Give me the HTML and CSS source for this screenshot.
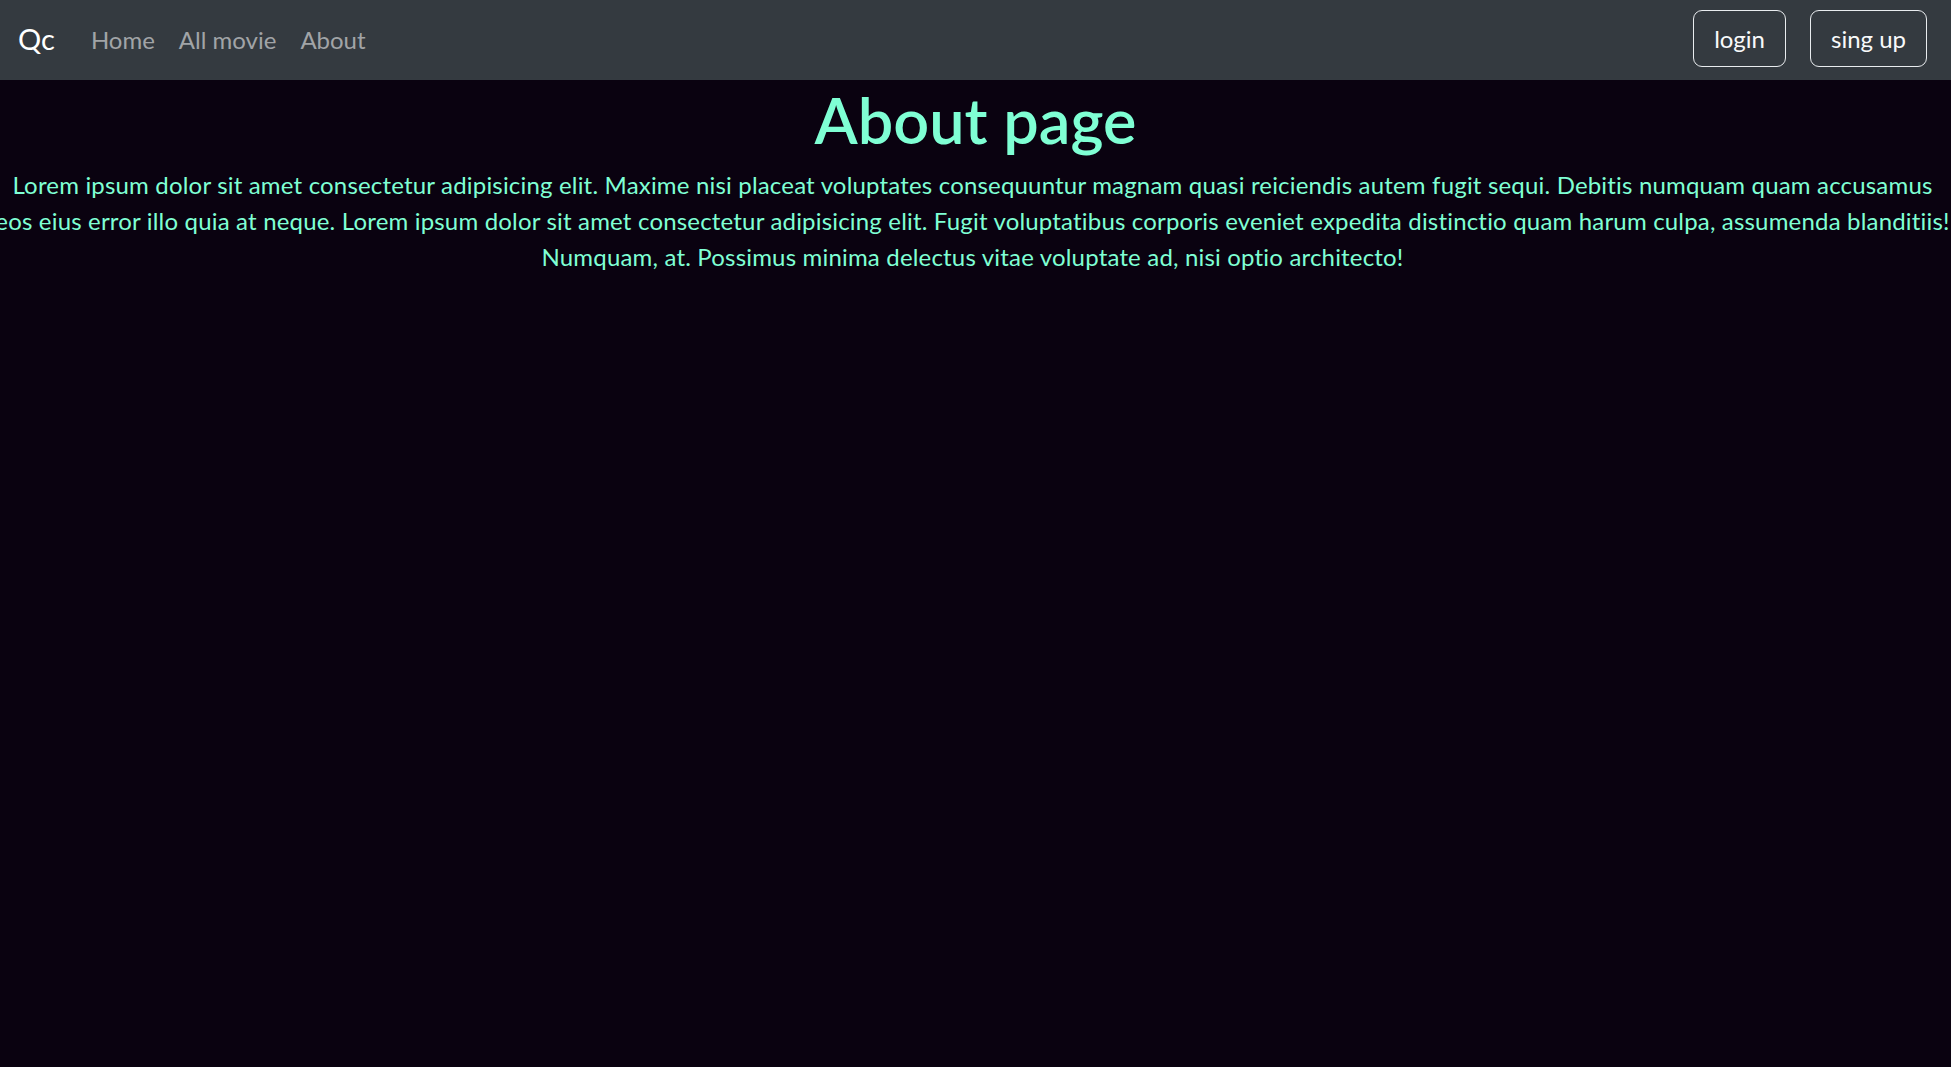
FILE: index.html
```html
<!DOCTYPE html>
<html lang="en">
<head>
<meta charset="utf-8">
<title>About page</title>
<link rel="stylesheet" href="styles.css">
</head>
<body>
<nav class="navbar">
  <a class="brand" href="#">Qc</a>
  <ul class="nav">
    <li><a class="nav-link" href="#">Home</a></li>
    <li><a class="nav-link" href="#">All movie</a></li>
    <li><a class="nav-link" href="#">About</a></li>
  </ul>
  <div class="actions">
    <button class="btn">login</button>
    <button class="btn">sing up</button>
  </div>
</nav>
<main class="about">
  <h1 class="title">About page</h1>
  <p class="text">Lorem ipsum dolor sit amet consectetur adipisicing elit. Maxime nisi placeat voluptates consequuntur magnam quasi reiciendis autem fugit sequi. Debitis numquam quam accusamus<br>eos eius error illo quia at neque. Lorem ipsum dolor sit amet consectetur adipisicing elit. Fugit voluptatibus corporis eveniet expedita distinctio quam harum culpa, assumenda blanditiis!<br>Numquam, at. Possimus minima delectus vitae voluptate ad, nisi optio architecto!</p>
</main>
</body>
</html>
```
FILE: styles.css
```css
* {
  box-sizing: border-box;
}

html, body {
  margin: 0;
  height: 100%;
}

body {
  background: #0a0210;
  font-family: Lato, "Open Sans", "Liberation Sans", sans-serif;
  font-size: 24px;
  line-height: 1.5;
  color: #7fffd4;
  overflow: hidden;
}

.navbar {
  display: flex;
  align-items: center;
  height: 80px;
  padding: 0 24px 0 18px;
  background: #343a40;
}

.brand {
  color: #ffffff;
  text-decoration: none;
  font-size: 29px;
  line-height: 1;
  margin-right: 24px;
  margin-bottom: 3px;
}

.nav {
  display: flex;
  list-style: none;
  margin: 0;
  padding: 0;
  flex: 1;
}

.nav-link {
  display: block;
  padding: 0 12px;
  color: #a1a4a7;
  text-decoration: none;
  font-size: 24px;
}

.actions {
  display: flex;
  gap: 24px;
  padding-bottom: 3px;
}

.btn {
  font-family: inherit;
  font-size: 24px;
  line-height: 1.5;
  color: #f8f9fa;
  background: transparent;
  border: 1px solid #e9ecef;
  border-radius: 9px;
  padding: 9px 20px;
  height: 57px;
}

.btn-wide {
  padding: 9px 21px;
}

.about {
  text-align: center;
}

.title {
  margin: 0 0 9px;
  padding-top: 2px;
  font-size: 63px;
  font-weight: 600;
  line-height: 1.2;
  color: #7fffd4;
}

.text {
  margin: 0 -15px 0 -21px;
  white-space: nowrap;
  letter-spacing: 0.18px;
}
```
